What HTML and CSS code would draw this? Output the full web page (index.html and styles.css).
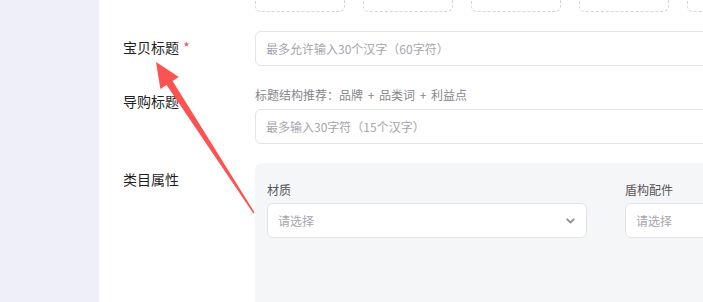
FILE: index.html
```html
<!DOCTYPE html>
<html lang="zh-CN">
<head>
<meta charset="utf-8">
<title>商品发布</title>
<link rel="stylesheet" href="styles.css">
</head>
<body>
<div class="app">
  <aside class="sidebar"></aside>
  <main class="main">
    <div class="row row-thumbs">
      <div class="label"></div>
      <div class="field thumbs">
        <div class="thumb"></div>
        <div class="thumb"></div>
        <div class="thumb"></div>
        <div class="thumb"></div>
        <div class="thumb"></div>
      </div>
    </div>

    <div class="row row-title">
      <div class="label">宝贝标题 <span class="req">*</span></div>
      <div class="field">
        <div class="input"><span class="ph">最多允许输入30个汉字（60字符）</span></div>
      </div>
    </div>

    <div class="row row-guide">
      <div class="label">导购标题</div>
      <div class="field">
        <div class="hint">标题结构推荐：品牌 + 品类词 + 利益点</div>
        <div class="input"><span class="ph">最多输入30字符（15个汉字）</span></div>
      </div>
    </div>

    <div class="row row-attr">
      <div class="label">类目属性</div>
      <div class="field">
        <div class="panel">
          <div class="attr">
            <div class="attr-label">材质</div>
            <div class="select">
              <span class="ph">请选择</span>
              <svg class="chev" width="9" height="6" viewBox="0 0 9 6"><path d="M1.2 1.3l3.3 3.2 3.3-3.2" fill="none" stroke="#8e9099" stroke-width="1.8" stroke-linecap="round" stroke-linejoin="round"/></svg>
            </div>
          </div>
          <div class="attr">
            <div class="attr-label">盾构配件</div>
            <div class="select">
              <span class="ph">请选择</span>
              <svg class="chev" width="9" height="6" viewBox="0 0 9 6"><path d="M1.2 1.3l3.3 3.2 3.3-3.2" fill="none" stroke="#8e9099" stroke-width="1.8" stroke-linecap="round" stroke-linejoin="round"/></svg>
            </div>
          </div>
        </div>
      </div>
    </div>
  </main>
</div>
<svg class="annot" width="703" height="302" viewBox="0 0 703 302">
  <polygon points="156,62 178.8,77 172.6,81 254.6,212.6 253.4,213.4 166.6,85 160.4,89" fill="#fb5252"/>
</svg>
</body>
</html>
```

FILE: styles.css
```css
* { box-sizing: border-box; }
html, body {
  margin: 0;
  padding: 0;
  width: 703px;
  height: 302px;
  overflow: hidden;
  background: #ffffff;
  font-family: "Noto Sans CJK SC", "Noto Sans", sans-serif;
  color: #222;
}
.app {
  display: flex;
  height: 302px;
  position: relative;
}
.sidebar {
  width: 99px;
  flex: none;
  background: #efeff9;
}
.main {
  flex: 1;
  overflow: hidden;
  padding-left: 24px;
}
.row {
  display: flex;
}
.label {
  width: 132px;
  flex: none;
  font-size: 14px;
  line-height: 22px;
  padding-top: 5px;
  color: #1f1f1f;
}
.req {
  color: #f5504f;
  margin-left: 1px;
}
.field {
  flex: none;
  width: 560px;
}
.row-thumbs {
  margin-top: -78px;
}
.row-thumbs .label { padding-top: 0; }
.thumbs {
  display: flex;
  gap: 18px;
}
.thumb {
  width: 90px;
  height: 90px;
  flex: none;
  border: 1px dashed #d6d6da;
  border-radius: 6px;
}
.row-title { margin-top: 19px; }
.row-guide { margin-top: 18px; }
.row-guide .label { padding-top: 6px; }
.row-attr { margin-top: 19px; }
.input {
  height: 35px;
  border: 1px solid #e3e4ea;
  border-radius: 6px;
  padding: 0 10px;
  display: flex;
  align-items: center;
  background: #fff;
}
.ph {
  font-size: 12px;
  color: #a5a6ad;
}
.hint {
  font-size: 12px;
  line-height: 22px;
  color: #85868c;
  margin-bottom: 3px;
  word-spacing: 2px;
}
.panel {
  background: #f5f6f8;
  border-radius: 8px;
  padding: 16px 12px 0;
  height: 160px;
  display: flex;
  gap: 38px;
}
.attr {
  width: 320px;
  flex: none;
}
.attr-label {
  font-size: 12px;
  line-height: 22px;
  color: #555;
  margin-bottom: 2px;
}
.select {
  height: 35px;
  border: 1px solid #e3e4ea;
  border-radius: 6px;
  background: #fff;
  padding: 0 10px 0 10px;
  display: flex;
  align-items: center;
  justify-content: space-between;
}
.chev {
  margin-right: 1px;
}
.annot {
  position: absolute;
  left: 0;
  top: 0;
  pointer-events: none;
}
```
